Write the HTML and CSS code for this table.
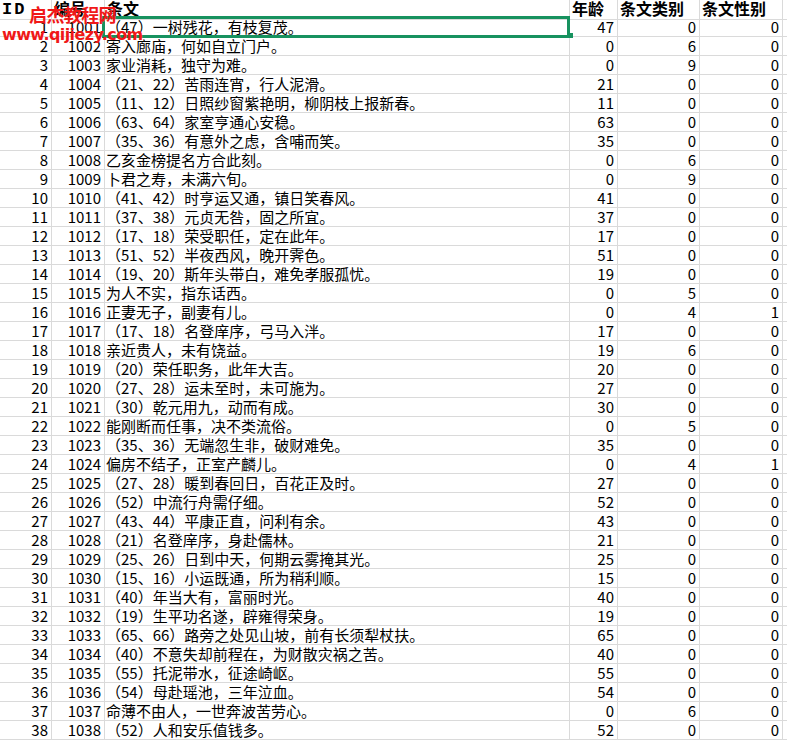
FILE: index.html
```html
<!DOCTYPE html>
<html lang="zh-CN">
<head>
<meta charset="utf-8">
<title>条文</title>
<link rel="stylesheet" href="styles.css">
</head>
<body>
<div class="sheet">
<div class="row head"><div class="c idh">ID</div><div class="c">编号</div><div class="c">条文</div><div class="c">年龄</div><div class="c">条文类别</div><div class="c">条文性别</div><div class="c"></div></div>
<div class="row"><div class="c n">1</div><div class="c n">1001</div><div class="c">（47）一树残花，有枝复茂。</div><div class="c n">47</div><div class="c n">0</div><div class="c n">0</div><div class="c"></div></div>
<div class="row"><div class="c n">2</div><div class="c n">1002</div><div class="c">寄入廊庙，何如自立门户。</div><div class="c n">0</div><div class="c n">6</div><div class="c n">0</div><div class="c"></div></div>
<div class="row"><div class="c n">3</div><div class="c n">1003</div><div class="c">家业消耗，独守为难。</div><div class="c n">0</div><div class="c n">9</div><div class="c n">0</div><div class="c"></div></div>
<div class="row"><div class="c n">4</div><div class="c n">1004</div><div class="c">（21、22）苦雨连宵，行人泥滑。</div><div class="c n">21</div><div class="c n">0</div><div class="c n">0</div><div class="c"></div></div>
<div class="row"><div class="c n">5</div><div class="c n">1005</div><div class="c">（11、12）日照纱窗紫艳明，柳阴枝上报新春。</div><div class="c n">11</div><div class="c n">0</div><div class="c n">0</div><div class="c"></div></div>
<div class="row"><div class="c n">6</div><div class="c n">1006</div><div class="c">（63、64）家室亨通心安稳。</div><div class="c n">63</div><div class="c n">0</div><div class="c n">0</div><div class="c"></div></div>
<div class="row"><div class="c n">7</div><div class="c n">1007</div><div class="c">（35、36）有意外之虑，含哺而笑。</div><div class="c n">35</div><div class="c n">0</div><div class="c n">0</div><div class="c"></div></div>
<div class="row"><div class="c n">8</div><div class="c n">1008</div><div class="c">乙亥金榜提名方合此刻。</div><div class="c n">0</div><div class="c n">6</div><div class="c n">0</div><div class="c"></div></div>
<div class="row"><div class="c n">9</div><div class="c n">1009</div><div class="c">卜君之寿，未满六旬。</div><div class="c n">0</div><div class="c n">9</div><div class="c n">0</div><div class="c"></div></div>
<div class="row"><div class="c n">10</div><div class="c n">1010</div><div class="c">（41、42）时亨运又通，镇日笑春风。</div><div class="c n">41</div><div class="c n">0</div><div class="c n">0</div><div class="c"></div></div>
<div class="row"><div class="c n">11</div><div class="c n">1011</div><div class="c">（37、38）元贞无咎，固之所宜。</div><div class="c n">37</div><div class="c n">0</div><div class="c n">0</div><div class="c"></div></div>
<div class="row"><div class="c n">12</div><div class="c n">1012</div><div class="c">（17、18）荣受职任，定在此年。</div><div class="c n">17</div><div class="c n">0</div><div class="c n">0</div><div class="c"></div></div>
<div class="row"><div class="c n">13</div><div class="c n">1013</div><div class="c">（51、52）半夜西风，晚开霁色。</div><div class="c n">51</div><div class="c n">0</div><div class="c n">0</div><div class="c"></div></div>
<div class="row"><div class="c n">14</div><div class="c n">1014</div><div class="c">（19、20）斯年头带白，难免孝服孤忧。</div><div class="c n">19</div><div class="c n">0</div><div class="c n">0</div><div class="c"></div></div>
<div class="row"><div class="c n">15</div><div class="c n">1015</div><div class="c">为人不实，指东话西。</div><div class="c n">0</div><div class="c n">5</div><div class="c n">0</div><div class="c"></div></div>
<div class="row"><div class="c n">16</div><div class="c n">1016</div><div class="c">正妻无子，副妻有儿。</div><div class="c n">0</div><div class="c n">4</div><div class="c n">1</div><div class="c"></div></div>
<div class="row"><div class="c n">17</div><div class="c n">1017</div><div class="c">（17、18）名登庠序，弓马入泮。</div><div class="c n">17</div><div class="c n">0</div><div class="c n">0</div><div class="c"></div></div>
<div class="row"><div class="c n">18</div><div class="c n">1018</div><div class="c">亲近贵人，未有饶益。</div><div class="c n">19</div><div class="c n">6</div><div class="c n">0</div><div class="c"></div></div>
<div class="row"><div class="c n">19</div><div class="c n">1019</div><div class="c">（20）荣任职务，此年大吉。</div><div class="c n">20</div><div class="c n">0</div><div class="c n">0</div><div class="c"></div></div>
<div class="row"><div class="c n">20</div><div class="c n">1020</div><div class="c">（27、28）运未至时，未可施为。</div><div class="c n">27</div><div class="c n">0</div><div class="c n">0</div><div class="c"></div></div>
<div class="row"><div class="c n">21</div><div class="c n">1021</div><div class="c">（30）乾元用九，动而有成。</div><div class="c n">30</div><div class="c n">0</div><div class="c n">0</div><div class="c"></div></div>
<div class="row"><div class="c n">22</div><div class="c n">1022</div><div class="c">能刚断而任事，决不类流俗。</div><div class="c n">0</div><div class="c n">5</div><div class="c n">0</div><div class="c"></div></div>
<div class="row"><div class="c n">23</div><div class="c n">1023</div><div class="c">（35、36）无端忽生非，破财难免。</div><div class="c n">35</div><div class="c n">0</div><div class="c n">0</div><div class="c"></div></div>
<div class="row"><div class="c n">24</div><div class="c n">1024</div><div class="c">偏房不结子，正室产麟儿。</div><div class="c n">0</div><div class="c n">4</div><div class="c n">1</div><div class="c"></div></div>
<div class="row"><div class="c n">25</div><div class="c n">1025</div><div class="c">（27、28）暖到春回日，百花正及时。</div><div class="c n">27</div><div class="c n">0</div><div class="c n">0</div><div class="c"></div></div>
<div class="row"><div class="c n">26</div><div class="c n">1026</div><div class="c">（52）中流行舟需仔细。</div><div class="c n">52</div><div class="c n">0</div><div class="c n">0</div><div class="c"></div></div>
<div class="row"><div class="c n">27</div><div class="c n">1027</div><div class="c">（43、44）平康正直，问利有余。</div><div class="c n">43</div><div class="c n">0</div><div class="c n">0</div><div class="c"></div></div>
<div class="row"><div class="c n">28</div><div class="c n">1028</div><div class="c">（21）名登庠序，身赴儒林。</div><div class="c n">21</div><div class="c n">0</div><div class="c n">0</div><div class="c"></div></div>
<div class="row"><div class="c n">29</div><div class="c n">1029</div><div class="c">（25、26）日到中天，何期云雾掩其光。</div><div class="c n">25</div><div class="c n">0</div><div class="c n">0</div><div class="c"></div></div>
<div class="row"><div class="c n">30</div><div class="c n">1030</div><div class="c">（15、16）小运既通，所为稍利顺。</div><div class="c n">15</div><div class="c n">0</div><div class="c n">0</div><div class="c"></div></div>
<div class="row"><div class="c n">31</div><div class="c n">1031</div><div class="c">（40）年当大有，富丽时光。</div><div class="c n">40</div><div class="c n">0</div><div class="c n">0</div><div class="c"></div></div>
<div class="row"><div class="c n">32</div><div class="c n">1032</div><div class="c">（19）生平功名遂，辟雍得荣身。</div><div class="c n">19</div><div class="c n">0</div><div class="c n">0</div><div class="c"></div></div>
<div class="row"><div class="c n">33</div><div class="c n">1033</div><div class="c">（65、66）路旁之处见山坡，前有长须犁杖扶。</div><div class="c n">65</div><div class="c n">0</div><div class="c n">0</div><div class="c"></div></div>
<div class="row"><div class="c n">34</div><div class="c n">1034</div><div class="c">（40）不意失却前程在，为财散灾祸之苦。</div><div class="c n">40</div><div class="c n">0</div><div class="c n">0</div><div class="c"></div></div>
<div class="row"><div class="c n">35</div><div class="c n">1035</div><div class="c">（55）托泥带水，征途崎岖。</div><div class="c n">55</div><div class="c n">0</div><div class="c n">0</div><div class="c"></div></div>
<div class="row"><div class="c n">36</div><div class="c n">1036</div><div class="c">（54）母赴瑶池，三年泣血。</div><div class="c n">54</div><div class="c n">0</div><div class="c n">0</div><div class="c"></div></div>
<div class="row"><div class="c n">37</div><div class="c n">1037</div><div class="c">命薄不由人，一世奔波苦劳心。</div><div class="c n">0</div><div class="c n">6</div><div class="c n">0</div><div class="c"></div></div>
<div class="row"><div class="c n">38</div><div class="c n">1038</div><div class="c">（52）人和安乐值钱多。</div><div class="c n">52</div><div class="c n">0</div><div class="c n">0</div><div class="c"></div></div>
<div class="sel"></div>
<div class="handle"></div>
<div class="wm1">启杰教程网</div>
<div class="wm2">www.qijiezy.com</div>
</div>
</body>
</html>
```
FILE: styles.css
```css
html, body {
  margin: 0;
  background: #fff;
}
.sheet {
  position: relative;
  height: 741px;
  overflow: hidden;
  font-family: "Noto Sans CJK SC", sans-serif;
  font-size: 15px;
  color: #000;
}
.row {
  display: grid;
  grid-template-columns: 52px 53px 465px 48px 82px 83px 1fr;
  height: 19px;
}
.c {
  box-sizing: border-box;
  border-right: 1px solid #dadada;
  border-bottom: 1px solid #dadada;
  line-height: 18px;
  white-space: nowrap;
  padding: 0 3px 0 1px;
}
.n {
  text-align: right;
}
.head {
  height: 18px;
}
.head .c {
  font-weight: bold;
  font-size: 16px;
  line-height: 17px;
  padding-left: 2px;
}
.head .idh {
  font-family: "Liberation Mono", monospace;
  font-size: 17px;
  letter-spacing: 2px;
  padding-left: 2px;
  line-height: 19px;
}
.sel {
  position: absolute;
  left: 102px;
  top: 16px;
  width: 468px;
  height: 22px;
  box-sizing: border-box;
  border: 3px solid #17925f;
}
.handle {
  position: absolute;
  left: 567px;
  top: 33px;
  width: 6px;
  height: 5px;
  background: #17925f;
}
.wm1 {
  position: absolute;
  left: 29px;
  top: 5px;
  font-family: "Noto Sans CJK SC", sans-serif;
  font-weight: bold;
  font-size: 18px;
  line-height: 18px;
  letter-spacing: -0.6px;
  color: #f01818;
}
.wm2 {
  position: absolute;
  left: 2px;
  top: 27px;
  font-family: "DejaVu Sans", sans-serif;
  font-weight: bold;
  font-size: 16px;
  line-height: 16px;
  letter-spacing: -0.6px;
  color: #f01818;
}
```
